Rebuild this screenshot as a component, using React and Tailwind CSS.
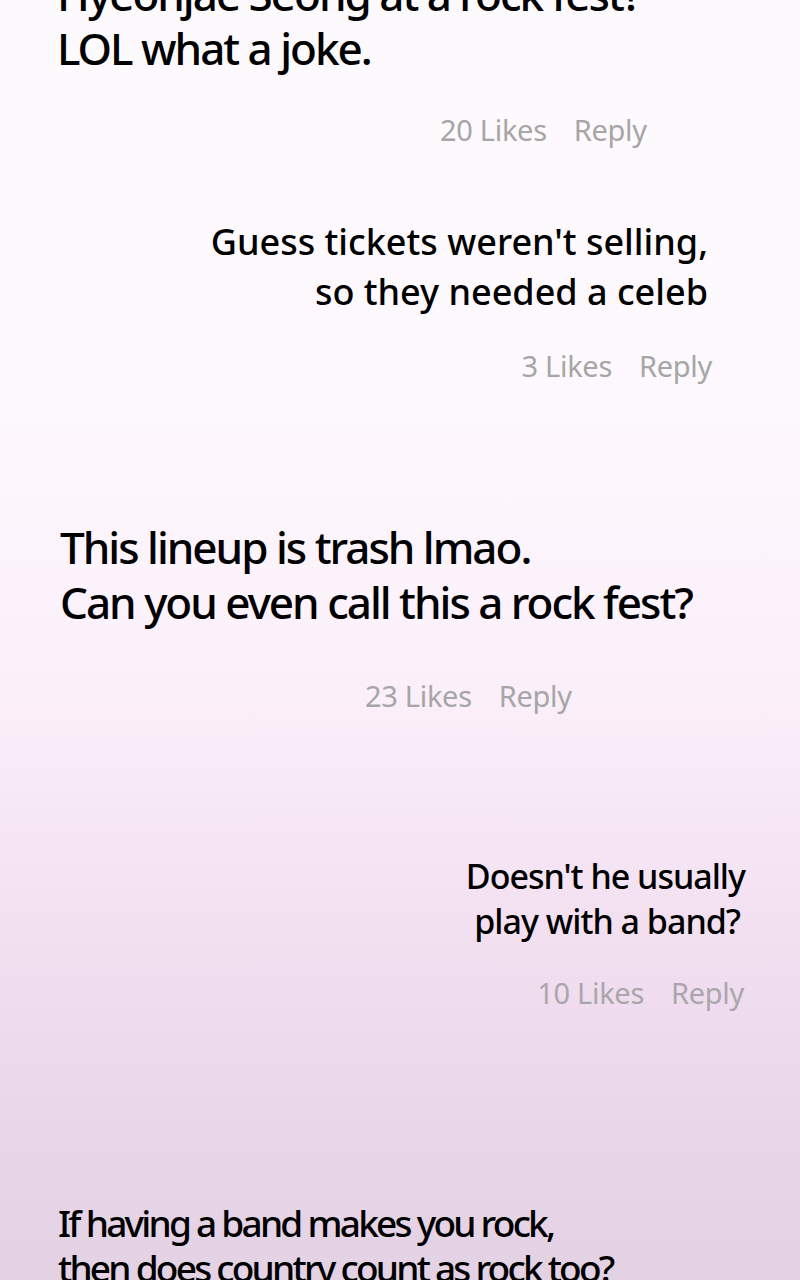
export default function App() {
  const font = { fontFamily: '"Noto Sans", "Open Sans", sans-serif' };
  return (
    <div
      className="w-[800px] h-[1280px] overflow-hidden bg-[linear-gradient(to_bottom,#fdfafd_0px,#fdf8fd_420px,#fbeffa_700px,#f5e4f3_860px,#efdcee_1000px,#e8d6e8_1150px,#e3d2e3_1280px)] text-black"
      style={font}
    >
      <div className="flex flex-col">
        {/* Comment 1 */}
        <div className="mt-[-33px] pl-[57px]">
          <div className="text-[44px] leading-[54px] tracking-[-2px] font-medium">
            <div>Hyeonjae Seong at a rock fest?</div>
            <div>LOL what a joke.</div>
          </div>
          <div className="mt-[37px] flex justify-start pl-[383px] gap-[27px] text-[29px] leading-[36px] tracking-[-0.3px] text-[#a6a6a6]">
            <span>20 Likes</span>
            <span>Reply</span>
          </div>
        </div>

        {/* Comment 2 */}
        <div className="mt-[69px] pr-[92px] flex flex-col items-end">
          <div className="text-[36px] leading-[50px] tracking-[0px] font-medium text-right">
            <div>Guess tickets weren't selling,</div>
            <div>so they needed a celeb</div>
          </div>
          <div className="mt-[31px] mr-[-4px] flex gap-[27px] text-[29px] leading-[36px] tracking-[-0.3px] text-[#a6a6a6]">
            <span>3 Likes</span>
            <span>Reply</span>
          </div>
        </div>

        {/* Comment 3 */}
        <div className="mt-[136px] pl-[60px]">
          <div className="text-[44px] leading-[55px] tracking-[-2px] font-medium">
            <div>This lineup is trash lmao.</div>
            <div>Can you even call this a rock fest?</div>
          </div>
          <div className="mt-[48px] flex pl-[305px] gap-[27px] text-[29px] leading-[36px] tracking-[-0.3px] text-[#a6a6a6]">
            <span>23 Likes</span>
            <span>Reply</span>
          </div>
        </div>

        {/* Comment 4 */}
        <div className="mt-[140px] pr-[55px] flex flex-col items-end">
          <div className="text-[34px] leading-[45px] tracking-[-1px] font-medium text-right">
            <div>Doesn't he usually</div>
            <div className="pr-[5px]">play with a band?</div>
          </div>
          <div className="mt-[31px] mr-[1px] flex gap-[27px] text-[29px] leading-[36px] tracking-[-0.3px] text-[#aba6ab]">
            <span>10 Likes</span>
            <span>Reply</span>
          </div>
        </div>

        {/* Comment 5 */}
        <div className="mt-[189px] pl-[58px]">
          <div className="text-[37px] leading-[45px] tracking-[-2.75px] font-medium">
            <div>If having a band makes you rock,</div>
            <div>then does country count as rock too?</div>
          </div>
        </div>
      </div>
    </div>
  );
}
